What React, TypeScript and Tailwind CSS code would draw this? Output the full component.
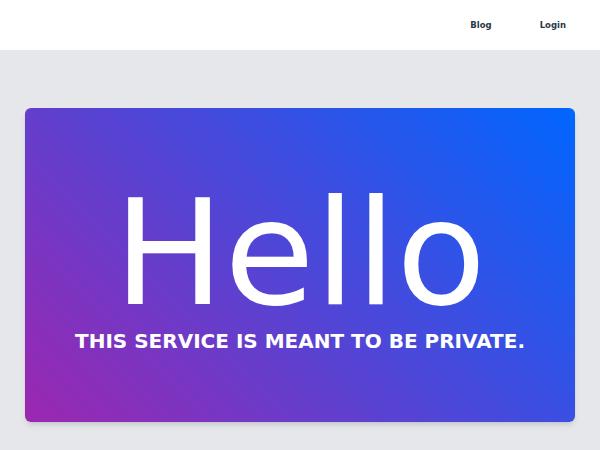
export default function App() {
  return (
    <div className="min-h-[450px] w-[600px] bg-[#e5e7eb]" style={{ fontFamily: '"DejaVu Sans", sans-serif' }}>
      <header className="h-[50px] bg-white flex items-center justify-end pr-[34px]">
        <nav className="flex items-center gap-[48px] text-[8.5px] font-bold text-[#2d3748]">
          <a>Blog</a>
          <a>Login</a>
        </nav>
      </header>
      <main className="px-[25px] pt-[58px] pb-[28px]">
        <div className="h-[314px] rounded-md shadow-md bg-[linear-gradient(45deg,#9c27b0,#0066ff)] flex flex-col items-center pt-[72px] text-white">
          <h1 className="text-[147px] leading-none font-normal">Hello</h1>
          <p className="mt-[4px] text-[20px] leading-none font-bold">THIS SERVICE IS MEANT TO BE PRIVATE.</p>
        </div>
      </main>
    </div>
  );
}
